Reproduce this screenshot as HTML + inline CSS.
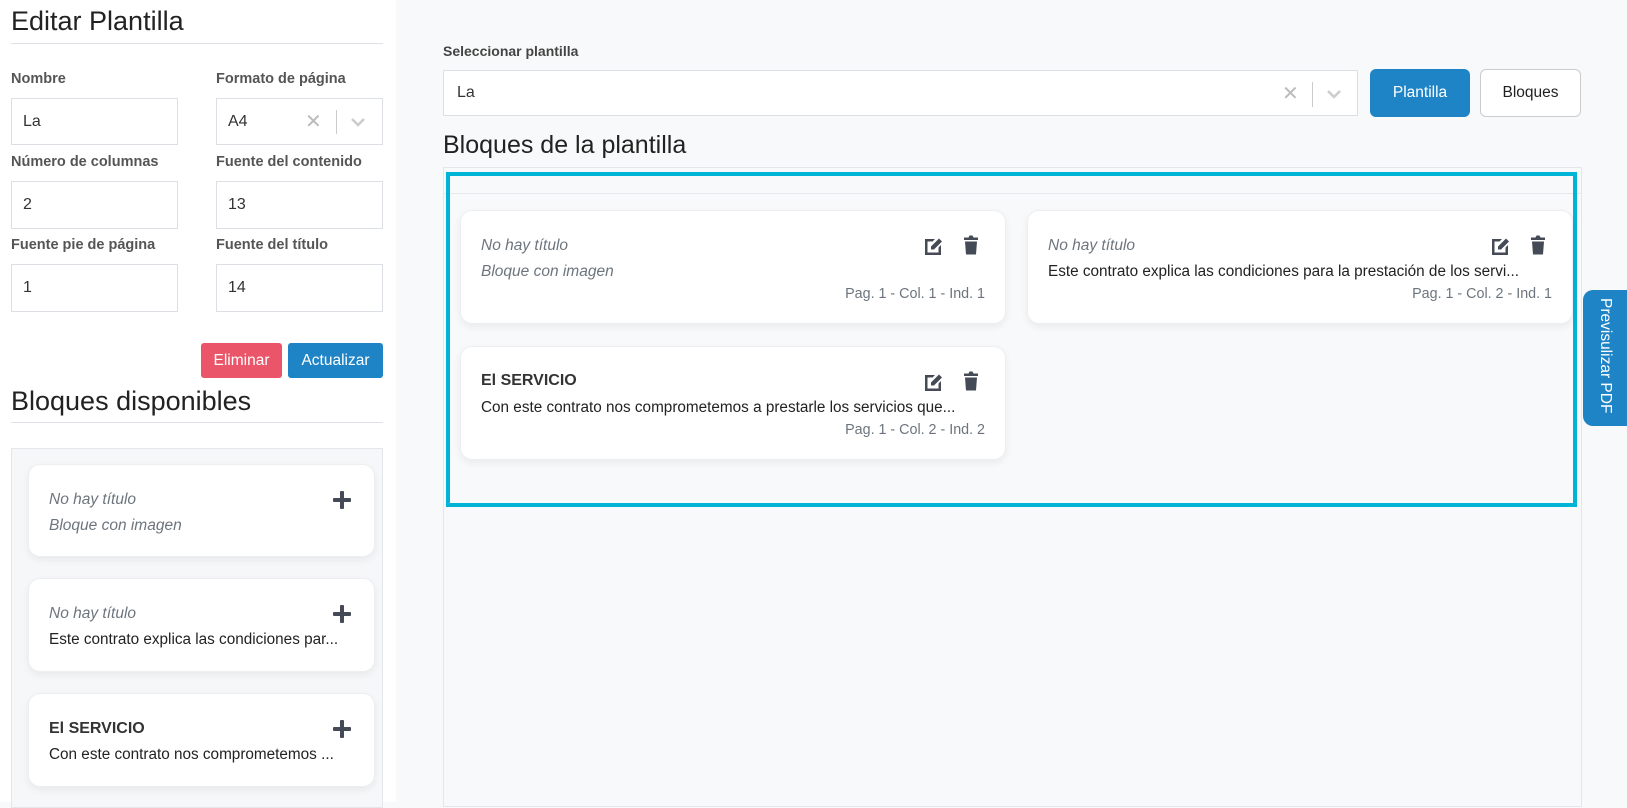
<!DOCTYPE html>
<html><head><meta charset="utf-8"><style>
*{box-sizing:border-box;margin:0;padding:0}
body{width:1627px;height:802px;overflow:hidden;font-family:"Liberation Sans",sans-serif;background:#f8f9fa;position:relative;color:#212529}
.abs{position:absolute}
.left{left:0;top:0;width:396px;height:802px;background:#fff}
h1{position:absolute;font-weight:400;font-size:27px;color:#222;left:11px}
.hr{position:absolute;height:1px;background:#dee2e6}
.lbl{position:absolute;font-weight:700;font-size:14.5px;color:#555}
.inp{position:absolute;border:1px solid #dcdfe3;background:#fff;font-size:16px;color:#333;padding-left:11px;display:flex;align-items:center}
.btn{position:absolute;color:#fff;font-size:15.5px;display:flex;align-items:center;justify-content:center;border-radius:3px}
.card{position:absolute;background:#fff;border:1px solid #eceef1;border-radius:12px;box-shadow:0 3px 8px rgba(0,0,0,.06)}
.it{font-style:italic;color:#6c757d;font-size:15.5px;position:absolute}
.tx{color:#222;font-size:15.3px;position:absolute;white-space:nowrap}
.b{font-weight:700;color:#333;font-size:16px;position:absolute}
.pag{position:absolute;color:#6c757d;font-size:14.3px;right:20px}
.plus{position:absolute;width:18px;height:18px}
.plus:before,.plus:after{content:"";position:absolute;background:#444b56;border-radius:1px}
.plus:before{left:7px;top:0;width:4px;height:18px}
.plus:after{left:0;top:7px;width:18px;height:4px}
</style></head><body>
<div class="abs left"></div>
<h1 style="top:6px">Editar Plantilla</h1>
<div class="hr" style="left:11px;top:43px;width:372px"></div>
<div class="lbl" style="left:11px;top:71px">Nombre</div>
<div class="lbl" style="left:216px;top:71px">Formato de página</div>
<div class="inp" style="left:11px;top:98px;width:167px;height:47px">La</div>
<div class="inp" style="left:216px;top:98px;width:167px;height:47px">A4
<span style="position:absolute;left:88px;color:#bbb;font-size:20px">✕</span>
<span style="position:absolute;left:119px;top:11px;width:1px;height:24px;background:#ccc"></span>
<svg style="position:absolute;left:133px;top:17px" width="16" height="12" viewBox="0 0 16 12"><path d="M2 3l6 6 6-6" stroke="#ccc" stroke-width="2.5" fill="none"/></svg></div>
<div class="lbl" style="left:11px;top:154px">Número de columnas</div>
<div class="lbl" style="left:216px;top:154px">Fuente del contenido</div>
<div class="inp" style="left:11px;top:181px;width:167px;height:48px">2</div>
<div class="inp" style="left:216px;top:181px;width:167px;height:48px">13</div>
<div class="lbl" style="left:11px;top:237px">Fuente pie de página</div>
<div class="lbl" style="left:216px;top:237px">Fuente del título</div>
<div class="inp" style="left:11px;top:264px;width:167px;height:48px">1</div>
<div class="inp" style="left:216px;top:264px;width:167px;height:48px">14</div>
<div class="btn" style="left:201px;top:343px;width:81px;height:35px;background:#ea5569">Eliminar</div>
<div class="btn" style="left:288px;top:343px;width:95px;height:35px;background:#1e84c6">Actualizar</div>
<h1 style="top:386px">Bloques disponibles</h1>
<div class="hr" style="left:11px;top:422px;width:372px"></div>
<div class="abs" style="left:11px;top:448px;width:372px;height:360px;background:#f6f7f9;border:1px solid #e3e6ea"></div>
<div class="card" style="left:28px;top:464px;width:347px;height:93px"><div class="it" style="left:20px;top:26px">No hay título</div><div class="it" style="left:20px;top:52px">Bloque con imagen</div><div class="plus" style="left:304px;top:26px"></div></div>
<div class="card" style="left:28px;top:578px;width:347px;height:94px"><div class="it" style="left:20px;top:26px">No hay título</div><div class="tx" style="left:20px;top:52px">Este contrato explica las condiciones par...</div><div class="plus" style="left:304px;top:26px"></div></div>
<div class="card" style="left:28px;top:693px;width:347px;height:94px"><div class="b" style="left:20px;top:26px">El SERVICIO</div><div class="tx" style="left:20px;top:52px">Con este contrato nos comprometemos ...</div><div class="plus" style="left:304px;top:26px"></div></div>

<div class="lbl" style="left:443px;top:43px;font-size:14px;color:#444">Seleccionar plantilla</div>
<div class="inp" style="left:443px;top:70px;width:915px;height:46px;padding-left:13px">La
<span style="position:absolute;left:838px;color:#bbb;font-size:20px">✕</span>
<span style="position:absolute;left:868px;top:11px;width:1px;height:25px;background:#ccc"></span>
<svg style="position:absolute;left:882px;top:17px" width="16" height="12" viewBox="0 0 16 12"><path d="M2 3l6 6 6-6" stroke="#ccc" stroke-width="2.5" fill="none"/></svg></div>
<div class="btn" style="left:1370px;top:69px;width:100px;height:48px;background:#1e84c6;border-radius:6px">Plantilla</div>
<div class="btn" style="left:1480px;top:69px;width:101px;height:48px;background:#fff;border:1px solid #ccc;border-radius:6px;color:#222">Bloques</div>
<h1 style="left:443px;top:131px;font-size:25px">Bloques de la plantilla</h1>
<div class="abs" style="left:443px;top:167px;width:1139px;height:640px;border:1px solid #e3e6ea;background:#f8f9fa"></div>
<div class="hr" style="left:443px;top:193px;width:1139px;background:#e6e8eb"></div>
<div class="abs" style="left:446px;top:172px;width:1131px;height:335px;border:4px solid #00b4d8"></div>
<svg width="0" height="0" style="position:absolute"><defs>
<symbol id="ed" viewBox="0 0 20 20"><path d="M1 3h10l-2.5 2.5H3.5v11h11v-5l2.5-2.5V19H1z" fill="#444b56"/><path d="M7 10.5l8-8 3 3-8 8H7z" fill="#444b56"/></symbol>
<symbol id="tr" viewBox="0 0 16 20"><path d="M1 2.5h4.5l1-2h3l1 2H15v2.5H1z M2 6.5h12l-1 13H3z" fill="#444b56"/></symbol>
</defs></svg>
<div class="card" style="left:460px;top:210px;width:546px;height:114px"><div class="it" style="left:20px;top:26px">No hay título</div><div class="it" style="left:20px;top:52px">Bloque con imagen</div><div class="pag" style="top:75px">Pag. 1 - Col. 1 - Ind. 1</div><svg class="abs" style="left:463px;top:25px" width="20" height="20"><use href="#ed"/></svg><svg class="abs" style="left:502px;top:24px" width="16" height="20"><use href="#tr"/></svg></div>
<div class="card" style="left:1027px;top:210px;width:546px;height:114px"><div class="it" style="left:20px;top:26px">No hay título</div><div class="tx" style="left:20px;top:52px">Este contrato explica las condiciones para la prestación de los servi...</div><div class="pag" style="top:75px">Pag. 1 - Col. 2 - Ind. 1</div><svg class="abs" style="left:463px;top:25px" width="20" height="20"><use href="#ed"/></svg><svg class="abs" style="left:502px;top:24px" width="16" height="20"><use href="#tr"/></svg></div>
<div class="card" style="left:460px;top:346px;width:546px;height:114px"><div class="b" style="left:20px;top:25px">El SERVICIO</div><div class="tx" style="left:20px;top:52px">Con este contrato nos comprometemos a prestarle los servicios que...</div><div class="pag" style="top:75px">Pag. 1 - Col. 2 - Ind. 2</div><svg class="abs" style="left:463px;top:25px" width="20" height="20"><use href="#ed"/></svg><svg class="abs" style="left:502px;top:24px" width="16" height="20"><use href="#tr"/></svg></div>
<div class="abs" style="left:1583px;top:290px;width:44px;height:136px;background:#1e84c6;border-radius:10px 0 0 10px"><div style="position:absolute;left:31px;top:8px;transform:rotate(90deg);transform-origin:0 0;color:#fff;font-size:15.5px;white-space:nowrap">Previsulizar PDF</div></div>
</body></html>
